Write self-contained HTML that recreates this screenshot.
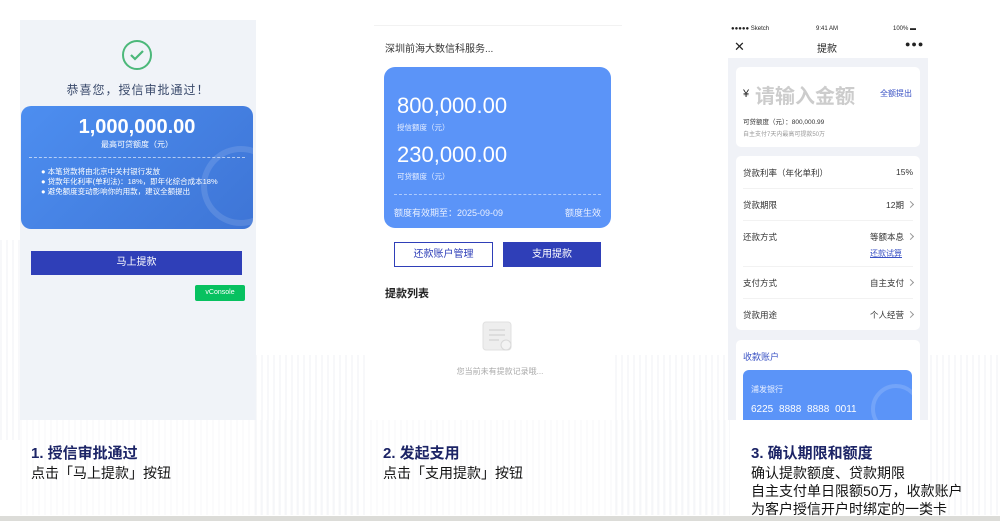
<!DOCTYPE html>
<html><head><meta charset="utf-8"><style>
*{margin:0;padding:0;box-sizing:border-box}
body{width:1000px;height:521px;overflow:hidden;background:#fff;position:relative;font-family:"Liberation Sans","Noto Sans CJK SC",sans-serif;color:#333}
.abs{position:absolute}
.stripes{background:repeating-linear-gradient(90deg,#eef0f4 0 2px,transparent 2px 6px);opacity:.45}
.cap{position:absolute;font-size:14px;line-height:18px;color:#111}
.cap b{display:block;color:#1c2466;font-size:15px;line-height:20px}
.row{position:absolute;left:743px;width:170px;font-size:8.5px;color:#333}
.row span{position:absolute;right:0;top:0}
.chev{display:inline-block;width:5px;height:5px;border-top:1px solid #999;border-right:1px solid #999;transform:rotate(45deg);margin-left:4px;position:relative;top:-1px}
</style></head><body>
<div class="abs stripes" style="left:0;top:240px;width:20px;height:200px"></div>
<div class="abs stripes" style="left:255px;top:355px;width:110px;height:160px"></div>
<div class="abs stripes" style="left:615px;top:355px;width:115px;height:160px"></div>
<div class="abs stripes" style="left:930px;top:355px;width:70px;height:160px"></div>
<div class="abs stripes" style="left:20px;top:420px;width:340px;height:95px;opacity:.25"></div>
<div class="abs stripes" style="left:370px;top:420px;width:360px;height:95px;opacity:.25"></div>
<div class="abs" style="left:0;top:516px;width:1000px;height:5px;background:#dcdcd8"></div>

<!-- panel 1 -->
<div class="abs" style="left:20px;top:20px;width:236px;height:400px;background:#f0f3f8"></div>
<svg class="abs" style="left:121px;top:39px" width="32" height="32" viewBox="0 0 32 32"><circle cx="16" cy="16" r="14" fill="none" stroke="#4cb87a" stroke-width="2"/><path d="M10 16l4 4 8-8" fill="none" stroke="#4cb87a" stroke-width="2.2"/></svg>
<div class="abs" style="left:20px;top:81px;width:236px;text-align:center;font-size:12px;color:#3a4a6b;letter-spacing:1px">恭喜您，授信审批通过！</div>
<div class="abs" style="left:21px;top:106px;width:232px;height:123px;border-radius:10px;background:linear-gradient(135deg,#4d8ef0,#3e75d6);overflow:hidden">
<div class="abs" style="left:180px;top:40px;width:80px;height:80px;border:6px solid rgba(255,255,255,.12);border-radius:50%"></div>
<div class="abs" style="left:0;top:10px;width:232px;text-align:center;color:#fff;font-size:20px;font-weight:bold">1,000,000.00</div>
<div class="abs" style="left:0;top:33px;width:232px;text-align:center;color:#fff;font-size:8px">最高可贷额度（元）</div>
<div class="abs" style="left:8px;top:51px;width:216px;border-top:1px dashed rgba(255,255,255,.6)"></div>
<div class="abs" style="left:20px;top:61px;color:#fff;font-size:7.5px;line-height:10px">● 本笔贷款将由北京中关村银行发放<br>● 贷款年化利率(单利法)：18%，即年化综合成本18%<br>● 避免额度变动影响你的用款，建议全额提出</div>
</div>
<div class="abs" style="left:31px;top:251px;width:211px;height:24px;background:#2f3fb8;color:#fff;font-size:10px;text-align:center;line-height:24px">马上提款</div>
<div class="abs" style="left:195px;top:285px;width:50px;height:16px;background:#07c160;color:#fff;font-size:7px;text-align:center;line-height:16px;border-radius:2px">vConsole</div>

<!-- panel 2 -->
<div class="abs" style="left:374px;top:25px;width:248px;border-top:1px solid #f2f2f2"></div>
<div class="abs" style="left:385px;top:40px;font-size:10px;color:#333">深圳前海大数信科服务...</div>
<div class="abs" style="left:384px;top:67px;width:227px;height:161px;border-radius:11px;background:#5b94f8;overflow:hidden">
<div class="abs" style="left:13px;top:26px;color:#fff;font-size:22px">800,000.00</div>
<div class="abs" style="left:13px;top:55px;color:#e8efff;font-size:7.5px">授信额度（元）</div>
<div class="abs" style="left:13px;top:75px;color:#fff;font-size:22px">230,000.00</div>
<div class="abs" style="left:13px;top:104px;color:#e8efff;font-size:7.5px">可贷额度（元）</div>
<div class="abs" style="left:10px;top:127px;width:207px;border-top:1px dashed rgba(255,255,255,.5)"></div>
<div class="abs" style="left:10px;top:139px;color:#e8efff;font-size:9px">额度有效期至：2025-09-09</div>
<div class="abs" style="right:10px;top:139px;color:#e8efff;font-size:9px">额度生效</div>
</div>
<div class="abs" style="left:394px;top:242px;width:99px;height:25px;border:1px solid #2f3fb8;color:#2f3fb8;font-size:10px;text-align:center;line-height:23px">还款账户管理</div>
<div class="abs" style="left:503px;top:242px;width:98px;height:25px;background:#2f3fb8;color:#fff;font-size:10px;text-align:center;line-height:25px">支用提款</div>
<div class="abs" style="left:385px;top:285px;font-size:11px;color:#222;font-weight:bold">提款列表</div>
<svg class="abs" style="left:480px;top:318px" width="36" height="36" viewBox="0 0 36 36"><rect x="3" y="4" width="28" height="28" rx="3" fill="#eee" stroke="#e0e0e0"/><path d="M9 12h16M9 17h16M9 22h10" stroke="#ddd" stroke-width="2"/><circle cx="26" cy="27" r="5" fill="#f3f3f3" stroke="#d8d8d8"/></svg>
<div class="abs" style="left:400px;top:366px;width:200px;text-align:center;font-size:8px;color:#aaa">您当前未有提款记录哦...</div>

<!-- panel 3 -->
<div class="abs" style="left:728px;top:22px;width:200px;height:398px;background:#f0f2f7"></div>
<div class="abs" style="left:728px;top:22px;width:200px;height:36px;background:#fff"></div>
<div class="abs" style="left:731px;top:26px;font-size:6px;color:#222">●●●●● Sketch</div>
<div class="abs" style="left:816px;top:26px;font-size:6px;color:#222">9:41 AM</div>
<div class="abs" style="left:893px;top:26px;font-size:6px;color:#222">100% ▬</div>
<div class="abs" style="left:734px;top:39px;font-size:13px;color:#222">✕</div>
<div class="abs" style="left:817px;top:40px;font-size:10px;color:#222">提款</div>
<div class="abs" style="left:905px;top:39px;font-size:9px;color:#222;letter-spacing:1px">●●●</div>
<div class="abs" style="left:736px;top:67px;width:184px;height:80px;background:#fff;border-radius:5px"></div>
<div class="abs" style="left:743px;top:88px;font-size:11px;color:#222">¥</div>
<div class="abs" style="left:755px;top:80px;font-size:20px;color:#ccc;font-weight:bold">请输入金额</div>
<div class="abs" style="left:880px;top:88px;font-size:8px;color:#3a52c4">全额提出</div>
<div class="abs" style="left:743px;top:116px;font-size:6.5px;color:#333">可贷额度（元）：800,000.99</div>
<div class="abs" style="left:743px;top:129px;font-size:6px;color:#999">自主支付7天内最高可提款50万</div>
<div class="abs" style="left:736px;top:156px;width:184px;height:174px;background:#fff;border-radius:5px"></div>
<div class="row" style="top:167px">贷款利率（年化单利）<span>15%</span></div>
<div class="row" style="top:199px">贷款期限<span>12期<i class="chev"></i></span></div>
<div class="row" style="top:231px">还款方式<span>等额本息<i class="chev"></i></span></div>
<div class="abs" style="left:870px;top:248px;font-size:8px;color:#3a52c4;text-decoration:underline">还款试算</div>
<div class="row" style="top:277px">支付方式<span>自主支付<i class="chev"></i></span></div>
<div class="row" style="top:309px">贷款用途<span>个人经营<i class="chev"></i></span></div>
<div class="abs" style="left:743px;top:188px;width:170px;border-top:1px solid #f2f2f2"></div>
<div class="abs" style="left:743px;top:220px;width:170px;border-top:1px solid #f2f2f2"></div>
<div class="abs" style="left:743px;top:266px;width:170px;border-top:1px solid #f2f2f2"></div>
<div class="abs" style="left:743px;top:298px;width:170px;border-top:1px solid #f2f2f2"></div>
<div class="abs" style="left:736px;top:340px;width:184px;height:80px;background:#fff;border-radius:5px 5px 0 0"></div>
<div class="abs" style="left:743px;top:350px;font-size:9px;color:#3a52c4">收款账户</div>
<div class="abs" style="left:743px;top:370px;width:169px;height:50px;background:#5b94f8;border-radius:6px 6px 0 0;overflow:hidden">
<div class="abs" style="left:8px;top:14px;font-size:8px;color:#e8efff">浦发银行</div>
<div class="abs" style="left:8px;top:34px;font-size:10px;color:#fff;word-spacing:3px">6225 8888 8888 0011</div>
<div class="abs" style="left:128px;top:14px;width:50px;height:50px;border:4px solid rgba(255,255,255,.15);border-radius:50%"></div>
</div>

<div class="cap" style="left:31px;top:444px"><b>1. 授信审批通过</b>点击「马上提款」按钮</div>
<div class="cap" style="left:383px;top:444px"><b>2. 发起支用</b>点击「支用提款」按钮</div>
<div class="cap" style="left:751px;top:444px"><b>3. 确认期限和额度</b>确认提款额度、贷款期限<br>自主支付单日限额50万，收款账户<br>为客户授信开户时绑定的一类卡</div>
</body></html>
